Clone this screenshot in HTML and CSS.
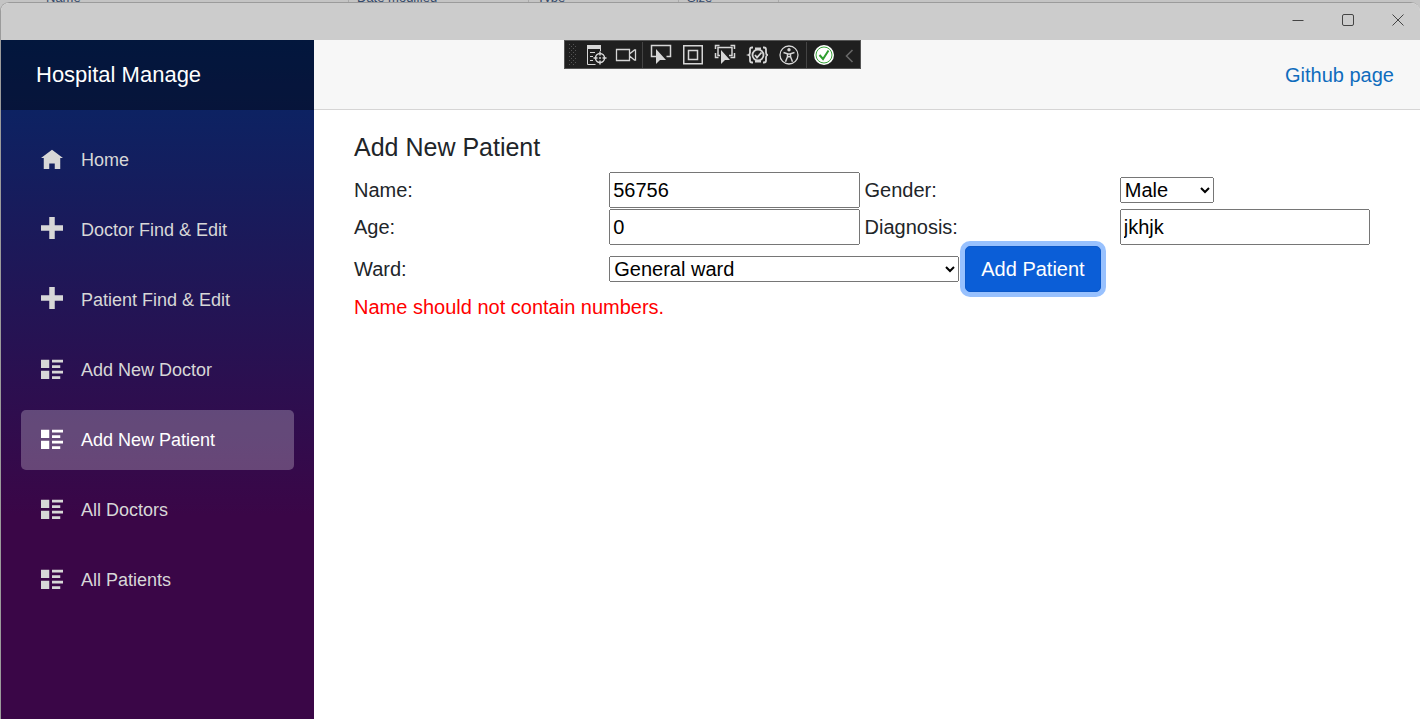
FILE: index.html
```html
<!DOCTYPE html>
<html lang="en">
<head>
<meta charset="utf-8">
<meta name="viewport" content="width=device-width, initial-scale=1">
<title>Hospital Manage</title>
<link rel="stylesheet" href="styles.css">
</head>
<body>
<svg class="sprite" aria-hidden="true">
  <symbol id="i-home" viewBox="0 0 8 8"><path d="M4 1l-4 3h1v4h2v-2h2v2h2v-4.03l1 .03-4-3z"/></symbol>
  <symbol id="i-plus" viewBox="0 0 8 8"><path d="M3 0v3h-3v2h3v3h2v-3h3v-2h-3v-3h-2z"/></symbol>
  <symbol id="i-list" viewBox="0 0 8 8"><path d="M0 1v3h3v-3h-3zm4 0v1h4v-1h-4zm0 2v1h3v-1h-3zm-4 2v3h3v-3h-3zm4 0v1h4v-1h-4zm0 2v1h3v-1h-3z"/></symbol>
</svg>
<div class="backdrop">
  <span class="col col-name">Name</span>
  <span class="col col-date">Date modified</span>
  <span class="col col-type">Type</span>
  <span class="col col-size">Size</span>
</div>
<div class="window">
  <div class="titlebar">
    <button class="win-btn" aria-label="Minimize"><svg width="12" height="12" viewBox="0 0 12 12"><path d="M.5 6.500h11"/></svg></button>
    <button class="win-btn" aria-label="Maximize"><svg width="12" height="12" viewBox="0 0 12 12"><rect x=".5" y=".5" width="11" height="11" rx="1.500"/></svg></button>
    <button class="win-btn" aria-label="Close"><svg width="12" height="12" viewBox="0 0 12 12"><path d="M.5.5l11 11M11.500.5l-11 11"/></svg></button>
  </div>
  <div class="page">
    <aside class="sidebar">
      <div class="brand-row"><a class="brand" href="#">Hospital Manage</a></div>
      <nav class="nav">
        <a class="nav-link" href="#"><svg class="nav-icon"><use href="#i-home"/></svg>Home</a>
        <a class="nav-link" href="#"><svg class="nav-icon"><use href="#i-plus"/></svg>Doctor Find &amp; Edit</a>
        <a class="nav-link" href="#"><svg class="nav-icon"><use href="#i-plus"/></svg>Patient Find &amp; Edit</a>
        <a class="nav-link" href="#"><svg class="nav-icon"><use href="#i-list"/></svg>Add New Doctor</a>
        <a class="nav-link active" href="#"><svg class="nav-icon"><use href="#i-list"/></svg>Add New Patient</a>
        <a class="nav-link" href="#"><svg class="nav-icon"><use href="#i-list"/></svg>All Doctors</a>
        <a class="nav-link" href="#"><svg class="nav-icon"><use href="#i-list"/></svg>All Patients</a>
      </nav>
    </aside>
    <main class="main">
      <div class="top-row"><a class="top-link" href="#">Github page</a></div>
      <article class="content">
        <h1 class="heading">Add New Patient</h1>
        <form class="form">
          <label for="name">Name:</label>
          <input class="field" id="name" type="text" value="56756">
          <label for="gender">Gender:</label>
          <select class="gender" id="gender"><option>Male</option><option>Female</option></select>
          <label for="age">Age:</label>
          <input class="field" id="age" type="text" inputmode="numeric" value="0">
          <label for="diagnosis">Diagnosis:</label>
          <input class="field" id="diagnosis" type="text" value="jkhjk">
          <label for="ward">Ward:</label>
          <div class="ward-cell">
            <select class="ward" id="ward"><option>General ward</option></select>
            <button class="submit" type="button">Add Patient</button>
          </div>
        </form>
        <p class="error" role="alert">Name should not contain numbers.</p>
      </article>
    </main>
  </div>
  <div class="debugbar">
    <svg class="grip" width="8" height="22" viewBox="0 0 8 22" fill="#555"><path d="M0 0h1v1h-1zM4 0h1v1h-1zM2 2h1v1h-1zM6 2h1v1h-1zM0 4h1v1h-1zM4 4h1v1h-1zM2 6h1v1h-1zM6 6h1v1h-1zM0 8h1v1h-1zM4 8h1v1h-1zM2 10h1v1h-1zM6 10h1v1h-1zM0 12h1v1h-1zM4 12h1v1h-1zM2 14h1v1h-1zM6 14h1v1h-1zM0 16h1v1h-1zM4 16h1v1h-1zM2 18h1v1h-1zM6 18h1v1h-1zM0 20h1v1h-1zM4 20h1v1h-1z"/></svg>
    <button class="tool tool-sm" aria-label="Live visual tree"><svg viewBox="0 0 22 22"><path d="M2 1h14v4h-14z" fill="#d6d6d6" stroke="none"/><path d="M2.500 5v15.500h8M15.500 5v2M5 8.500h5M5 12.500h3M5 16.500h3"/><circle cx="15" cy="14" r="4.500" stroke-width="1.500"/><path d="M15 7.500v4M15 16.500v4M8.500 14h4M17.500 14h4" stroke-width="1.500"/><circle cx="15" cy="14" r="1" fill="#d6d6d6" stroke="none"/></svg></button>
    <button class="tool tool-sm" aria-label="Record"><svg viewBox="0 0 22 22"><path d="M1.500 5.500h13v11h-13zM14.500 10l5-4h1v10h-1l-5-4" stroke-width="1.300"/></svg></button>
    <span class="sep"></span>
    <button class="tool" aria-label="Select element"><svg viewBox="0 0 22 22"><path d="M6 12.500h-4.500v-11h19v11h-4" stroke-width="1.500"/><path d="M6 5v15l4-4h6z" fill="#d6d6d6" stroke="none"/></svg></button>
    <button class="tool" aria-label="Display layout adorners"><svg viewBox="0 0 22 22"><path d="M1.750 1.750h18.500v18h-18.500zM6.500 6.500h9v9h-9z" stroke-width="1.500"/></svg></button>
    <button class="tool" aria-label="Track focused element"><svg viewBox="0 0 22 22"><path d="M1.500 5v-3.500h4M16.500 1.500h4v3.500M1.500 9v4.500h3M20.500 9v4.500h-4M6 11.500h-2v-8h14v8h-3" stroke-width="1.500"/><path d="M7 6v14l4-4h5z" fill="#d6d6d6" stroke="none"/></svg></button>
    <button class="tool" aria-label="Binding failures"><svg viewBox="0 0 22 22"><g stroke-width="1.800"><path d="M7 3.500h-1q-2 0-2 2v3q0 2-1.500 2.500q1.500.5 1.500 2.500v3q0 2 2 2h1M17 3.500h1q2 0 2 2v3q0 2 1.500 2.500q-1.500.5-1.500 2.500v3q0 2-2 2h-1"/><circle cx="12" cy="11" r="5.500"/><path d="M9 11l2 2.500 4.500-5M9 4.500h6M9 17.500h6"/></g></svg></button>
    <button class="tool" aria-label="Scan for accessibility issues"><svg viewBox="0 0 22 22"><circle cx="11" cy="11" r="9" stroke-width="1.300"/><circle cx="11" cy="5.800" r="1.700" fill="#d6d6d6" stroke="none"/><path d="M5.500 8.500l4 1.200v3l-2 5M16.500 8.500l-4 1.200v3l2 5M9.500 10h3M9.500 12.700h3" stroke-width="1.500"/></svg></button>
    <span class="sep"></span>
    <button class="tool tool-sm" aria-label="Hot reload"><svg viewBox="0 0 22 22"><circle cx="11" cy="11" r="10" fill="#fff" stroke="none"/><circle cx="11" cy="11" r="8" stroke="#3ba43b"/><path d="M6.500 11l3.500 4 5.500-8.500" stroke="#2f9e2f" stroke-width="2"/></svg></button>
    <button class="tool tool-end" aria-label="Collapse toolbar"><svg viewBox="0 0 22 22"><path d="M13.500 6l-6 6 6 6" stroke="#686868" stroke-width="1.600"/></svg></button>
  </div>
</div>
</body>
</html>
```

FILE: styles.css
```css
* { box-sizing: border-box; }

body {
  margin: 0;
  min-height: 100vh;
  display: flex;
  flex-direction: column;
  background: #c4c4c4;
  color: #212529;
  font-family: "Liberation Sans", Arial, sans-serif;
  font-size: 20px;
  line-height: 30px;
}

.sprite { position: absolute; width: 0; height: 0; }

/* Sliver of the file list showing behind the window */
.backdrop {
  height: 2px;
  display: flex;
  align-items: flex-end;
  padding-left: 38px;
  overflow: hidden;
  color: #34496b;
  font-size: 13px;
  line-height: 8px;
  white-space: nowrap;
}
.col { flex: none; padding-left: 8px; border-right: 1px solid #aaa; }
.col-name { width: 311px; }
.col-date { width: 180px; }
.col-type { width: 150px; }
.col-size { width: 100px; }

.window {
  position: relative;
  flex: 1;
  display: flex;
  flex-direction: column;
  border: 1px solid #9b9b9b;
  border-width: 1px 0 0 1px;
  border-radius: 9px 9px 0 0;
  overflow: hidden;
  background: #fff;
}

.titlebar {
  height: 37px;
  display: flex;
  justify-content: flex-end;
  align-items: flex-start;
  gap: 6px;
  background: #ccc;
}
.win-btn {
  width: 44px;
  height: 34px;
  padding: 0;
  border: 0;
  background: none;
  display: flex;
  align-items: center;
  justify-content: center;
}
.win-btn svg { fill: none; stroke: #444; }

.page { flex: 1; display: flex; }

.sidebar {
  width: 313px;
  flex: none;
  background: linear-gradient(180deg, #052767 0%, #3a0647 70%);
}
.brand-row {
  height: 70px;
  display: flex;
  align-items: center;
  padding: 0 35px;
  background: rgba(0, 0, 0, 0.4);
}
.brand { color: #fff; font-size: 22px; text-decoration: none; }

.nav { display: flex; flex-direction: column; gap: 10px; padding: 20px; }
.nav-link {
  height: 60px;
  display: flex;
  align-items: center;
  padding: 0 20px;
  border-radius: 5px;
  color: #d7d7d7;
  font-size: 18px;
  text-decoration: none;
}
.nav-link.active { color: #fff; background: rgba(255, 255, 255, 0.25); }
.nav-icon {
  width: 22px;
  height: 22px;
  margin: 0 18px 4px 0;
  fill: currentColor;
}

.main { flex: 1; min-width: 0; }
.top-row {
  height: 70px;
  display: flex;
  align-items: center;
  justify-content: flex-end;
  padding: 0 26px;
  background: #f7f7f7;
  border-bottom: 1px solid #d6d5d5;
}
.top-link { color: #0f6cbd; text-decoration: none; }

.content { padding: 22px 50px 22px 40px; }
.heading { margin: 0 0 10px; font-size: 25px; font-weight: 400; line-height: 30px; }

.form {
  display: grid;
  grid-template-columns: repeat(4, minmax(0, 1fr));
  gap: 1px 5px;
  align-items: center;
}
.field, .gender, .ward, .submit { font: inherit; margin: 0; }
.field { width: 100%; height: 36px; color: #000; }
.gender { justify-self: start; width: 94px; color: #000; }
.ward { width: 350px; color: #000; }
.ward-cell { grid-column: span 3; display: flex; align-items: center; gap: 6px; }
.submit {
  padding: 7px 15px;
  border: 1px solid #0a58ca;
  border-radius: 5px;
  background: #0b5ed7;
  color: #fff;
  box-shadow: 0 0 0 5px #98c1fe;
}
.error { margin: 0; color: #f00; }

/* Debugger toolbar floating over the page */
.debugbar {
  position: absolute;
  top: 37px;
  left: 563px;
  height: 29px;
  display: flex;
  align-items: center;
  border: 1px solid #555;
  background: #1f1f1f;
}
.grip { margin: 0 4px; }
.tool {
  width: 32px;
  height: 27px;
  padding: 0;
  border: 0;
  background: none;
  display: flex;
  align-items: center;
  justify-content: center;
}
.tool svg { width: 22px; height: 22px; flex: none; fill: none; stroke: #d6d6d6; }
.tool-sm { width: 30px; }
.tool-end { width: 21px; }
.sep { width: 1px; height: 26px; margin: 0 2px 0 1px; background: #444; }
```
